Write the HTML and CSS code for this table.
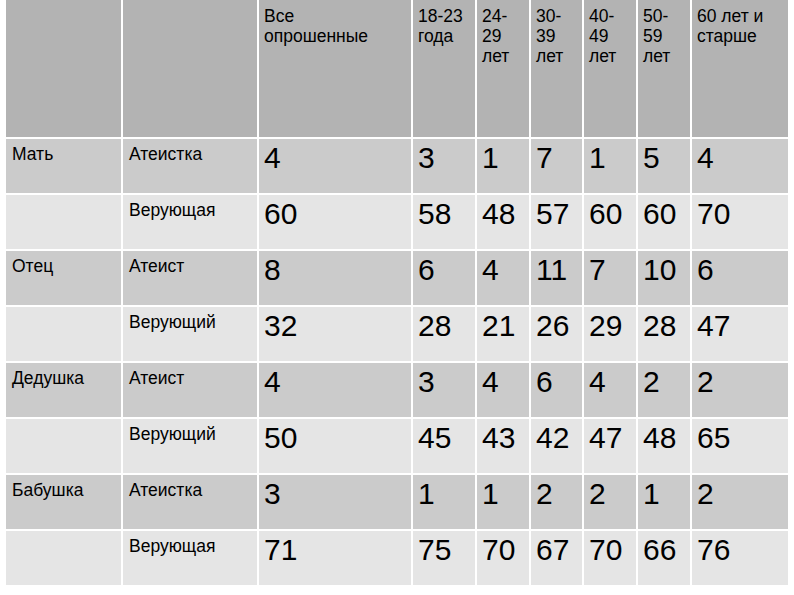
FILE: index.html
```html
<!DOCTYPE html>
<html lang="ru">
<head>
<meta charset="utf-8">
<title>Таблица</title>
<link rel="stylesheet" href="styles.css">
</head>
<body>
<div class="grid">
  <div class="cell head"></div>
  <div class="cell head"></div>
  <div class="cell head">Все<br>опрошенные</div>
  <div class="cell head">18-23<br>года</div>
  <div class="cell head">24-<br>29<br>лет</div>
  <div class="cell head">30-<br>39<br>лет</div>
  <div class="cell head">40-<br>49<br>лет</div>
  <div class="cell head">50-<br>59<br>лет</div>
  <div class="cell head">60 лет и<br>старше</div>

  <div class="cell dark label">Мать</div>
  <div class="cell dark label">Атеистка</div>
  <div class="cell dark num">4</div><div class="cell dark num">3</div><div class="cell dark num">1</div><div class="cell dark num">7</div><div class="cell dark num">1</div><div class="cell dark num">5</div><div class="cell dark num">4</div>

  <div class="cell light label"></div>
  <div class="cell light label">Верующая</div>
  <div class="cell light num">60</div><div class="cell light num">58</div><div class="cell light num">48</div><div class="cell light num">57</div><div class="cell light num">60</div><div class="cell light num">60</div><div class="cell light num">70</div>

  <div class="cell dark label">Отец</div>
  <div class="cell dark label">Атеист</div>
  <div class="cell dark num">8</div><div class="cell dark num">6</div><div class="cell dark num">4</div><div class="cell dark num">11</div><div class="cell dark num">7</div><div class="cell dark num">10</div><div class="cell dark num">6</div>

  <div class="cell light label"></div>
  <div class="cell light label">Верующий</div>
  <div class="cell light num">32</div><div class="cell light num">28</div><div class="cell light num">21</div><div class="cell light num">26</div><div class="cell light num">29</div><div class="cell light num">28</div><div class="cell light num">47</div>

  <div class="cell dark label">Дедушка</div>
  <div class="cell dark label">Атеист</div>
  <div class="cell dark num">4</div><div class="cell dark num">3</div><div class="cell dark num">4</div><div class="cell dark num">6</div><div class="cell dark num">4</div><div class="cell dark num">2</div><div class="cell dark num">2</div>

  <div class="cell light label"></div>
  <div class="cell light label">Верующий</div>
  <div class="cell light num">50</div><div class="cell light num">45</div><div class="cell light num">43</div><div class="cell light num">42</div><div class="cell light num">47</div><div class="cell light num">48</div><div class="cell light num">65</div>

  <div class="cell dark label">Бабушка</div>
  <div class="cell dark label">Атеистка</div>
  <div class="cell dark num">3</div><div class="cell dark num">1</div><div class="cell dark num">1</div><div class="cell dark num">2</div><div class="cell dark num">2</div><div class="cell dark num">1</div><div class="cell dark num">2</div>

  <div class="cell light label"></div>
  <div class="cell light label">Верующая</div>
  <div class="cell light num">71</div><div class="cell light num">75</div><div class="cell light num">70</div><div class="cell light num">67</div><div class="cell light num">70</div><div class="cell light num">66</div><div class="cell light num">76</div>
</div>
</body>
</html>
```
FILE: styles.css
```css
html, body {
  margin: 0;
  padding: 0;
  background: #ffffff;
}
body {
  font-family: "Liberation Sans", Arial, sans-serif;
  color: #000000;
}
.grid {
  display: grid;
  grid-template-columns: 115px 134px 152px 62px 52px 51px 52px 52px 96px;
  grid-template-rows: 137px repeat(8, 54px);
  gap: 2px;
  margin-left: 6px;
  width: 782px;
}
.cell {
  padding-left: 5px;
  box-sizing: border-box;
  overflow: hidden;
}
.head {
  background: #b3b3b3;
  font-size: 17.5px;
  line-height: 20px;
  padding-top: 6px;
}
.dark {
  background: #cbcbcb;
}
.light {
  background: #e5e5e5;
}
.label {
  font-size: 17.5px;
  line-height: 20px;
  padding-top: 5px;
  padding-left: 6px;
}
.num {
  font-size: 30px;
  line-height: 34px;
  padding-top: 2px;
}
```
